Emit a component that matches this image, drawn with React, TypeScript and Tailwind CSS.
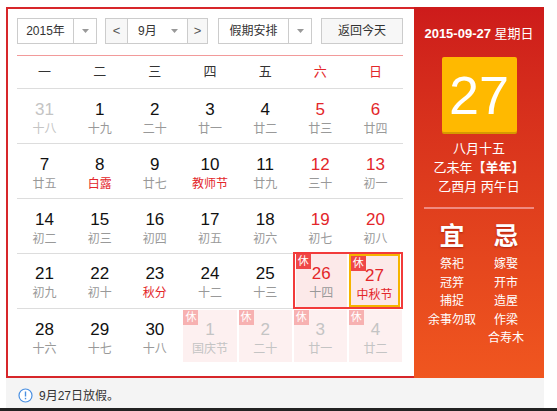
import React from "react";

type Day = {
  d: string;
  l: string;
  red?: boolean;
  fest?: boolean;
  other?: boolean;
  rest?: boolean;
  today?: boolean;
};

const weeks: Day[][] = [
  [
    { d: "31", l: "十八", other: true },
    { d: "1", l: "十九" },
    { d: "2", l: "二十" },
    { d: "3", l: "廿一" },
    { d: "4", l: "廿二" },
    { d: "5", l: "廿三", red: true },
    { d: "6", l: "廿四", red: true },
  ],
  [
    { d: "7", l: "廿五" },
    { d: "8", l: "白露", fest: true },
    { d: "9", l: "廿七" },
    { d: "10", l: "教师节", fest: true },
    { d: "11", l: "廿九" },
    { d: "12", l: "三十", red: true },
    { d: "13", l: "初一", red: true },
  ],
  [
    { d: "14", l: "初二" },
    { d: "15", l: "初三" },
    { d: "16", l: "初四" },
    { d: "17", l: "初五" },
    { d: "18", l: "初六" },
    { d: "19", l: "初七", red: true },
    { d: "20", l: "初八", red: true },
  ],
  [
    { d: "21", l: "初九" },
    { d: "22", l: "初十" },
    { d: "23", l: "秋分", fest: true },
    { d: "24", l: "十二" },
    { d: "25", l: "十三" },
    { d: "26", l: "十四", red: true, rest: true },
    { d: "27", l: "中秋节", red: true, fest: true, rest: true, today: true },
  ],
  [
    { d: "28", l: "十六" },
    { d: "29", l: "十七" },
    { d: "30", l: "十八" },
    { d: "1", l: "国庆节", other: true, rest: true },
    { d: "2", l: "二十", other: true, rest: true },
    { d: "3", l: "廿一", other: true, rest: true },
    { d: "4", l: "廿二", other: true, rest: true },
  ],
];

const font = "font-['Liberation_Sans','Noto_Sans_CJK_SC',sans-serif]";

function Caret() {
  return (
    <svg width="7" height="4" viewBox="0 0 7 4" className="block">
      <path d="M0 0h7L3.5 4z" fill="#999" />
    </svg>
  );
}

function Cell({ day }: { day: Day }) {
  const numColor = day.other
    ? "text-[#c4c4c4]"
    : day.red
      ? "text-[#e3262a]"
      : "text-[#111]";
  const lunarColor = day.other
    ? "text-[#c4c4c4]"
    : day.fest
      ? "text-[#e3262a]"
      : "text-[#999]";
  const bg = day.rest ? (day.other ? "bg-[#fdf0f0]" : "bg-[#fce9e9]") : "";
  const frame = day.today ? "border-2 border-[#f5b400]" : "";
  return (
    <div className={`relative mx-px h-full ${bg} ${frame} flex flex-col items-center pt-[9px]`}>
      {day.rest && (
        <span
          className={`absolute left-0 top-0 flex h-[15px] w-[15px] items-center justify-center text-[11px] leading-none text-white ${
            day.other ? "bg-[#f7b1b1]" : "bg-[#ef4747]"
          }`}
        >
          休
        </span>
      )}
      <span className={`text-[17px] leading-[22px] ${numColor}`}>{day.d}</span>
      <span className={`text-[12px] leading-[16px] ${lunarColor}`}>{day.l}</span>
    </div>
  );
}

export default function App() {
  const heads = ["一", "二", "三", "四", "五", "六", "日"];
  return (
    <div className={`relative h-[411px] w-[557px] overflow-hidden bg-white ${font}`}>
      <div className="ml-[6px] mt-[7px] flex w-[538px]">
        {/* left calendar */}
        <div className="h-[371px] w-[408px] border-y-2 border-l-2 border-[#d7262a] pl-[9px] pt-[9px]">
          <div className="flex h-[26px] w-[386px] items-stretch text-[12px] text-[#333]">
            <div className="flex w-[80px] border border-[#ccc] bg-white">
              <div className="flex flex-1 items-center justify-center">2015年</div>
              <div className="flex w-[23px] items-center justify-center border-l border-[#ccc]">
                <Caret />
              </div>
            </div>
            <div className="ml-[8px] flex w-[103px] border border-[#ccc] bg-white">
              <div className="flex w-[22px] items-center justify-center border-r border-[#ccc] bg-[#f7f7f7] text-[13px] text-[#555]">
                &lt;
              </div>
              <div className="flex flex-1 items-center justify-between pl-[10px] pr-[9px]">
                <span>9月</span>
                <Caret />
              </div>
              <div className="flex w-[20px] items-center justify-center border-l border-[#ccc] bg-[#f7f7f7] text-[13px] text-[#555]">
                &gt;
              </div>
            </div>
            <div className="ml-[10px] flex w-[94px] border border-[#ccc] bg-white">
              <div className="flex flex-1 items-center justify-center">假期安排</div>
              <div className="flex w-[23px] items-center justify-center border-l border-[#ccc]">
                <Caret />
              </div>
            </div>
            <div className="ml-[9px] flex flex-1 items-center justify-center border border-[#ccc] bg-[#f7f7f7]">
              返回今天
            </div>
          </div>
          <div className="mt-[11px] h-px w-[386px] bg-[#f29a9a]" />
          <div className="grid h-[33px] w-[386px] grid-cols-7 border-b border-[#ddd] text-[13px]">
            {heads.map((h, i) => (
              <div
                key={h}
                className={`flex items-center justify-center ${i > 4 ? "text-[#e3262a]" : "text-[#333]"}`}
              >
                {h}
              </div>
            ))}
          </div>
          {weeks.map((w, wi) => (
            <div
              key={wi}
              className={`grid w-[386px] grid-cols-7 ${wi < 4 ? "h-[55px] border-b border-[#ddd]" : "h-[54px]"}`}
            >
              {wi === 3 ? (
                <>
                  {w.slice(0, 5).map((d, i) => (
                    <Cell key={i} day={d} />
                  ))}
                  <div className="col-span-2 -mb-px -mt-[2px] grid grid-cols-2 border-2 border-[#f23b3b]">
                    {w.slice(5).map((d, i) => (
                      <div key={i} className="h-full">
                        <Cell day={d} />
                      </div>
                    ))}
                  </div>
                </>
              ) : (
                w.map((d, i) => (
                  <div key={i} className="h-full py-px">
                    <Cell day={d} />
                  </div>
                ))
              )}
            </div>
          ))}
        </div>

        {/* right panel */}
        <div className="flex h-[371px] w-[130px] flex-col items-center bg-gradient-to-b from-[#cd1b1b] to-[#f0561f] text-white">
          <div className="mt-[19px] text-[13px] font-bold leading-[16px]">
            2015-09-27 <span className="font-normal">星期日</span>
          </div>
          <div className="mt-[15px] flex h-[75px] w-[75px] items-center justify-center rounded-[2px] bg-[#ffb900] shadow-[0_2px_0_#d69a00]">
            <span className="text-[54px] leading-none text-white">27</span>
          </div>
          <div className="mt-[7px] flex flex-col items-center text-[13px] leading-[19px]">
            <span>八月十五</span>
            <span>
              乙未年<span className="font-bold">【羊年】</span>
            </span>
            <span>乙酉月 丙午日</span>
          </div>
          <div className="mt-[11px] h-[2px] w-[110px] bg-[#f08a80]" />
          <div className="mt-[12px] grid w-[108px] grid-cols-2">
            <div className="flex flex-col items-center">
              <span className="text-[25px] font-bold leading-[30px] [text-shadow:0_1px_2px_rgba(120,0,0,0.5)]">宜</span>
              <div className="mt-[4px] flex flex-col items-center text-[12px] leading-[18.5px]">
                <span>祭祀</span>
                <span>冠笄</span>
                <span>捕捉</span>
                <span className="whitespace-nowrap">余事勿取</span>
              </div>
            </div>
            <div className="flex flex-col items-center">
              <span className="text-[25px] font-bold leading-[30px] [text-shadow:0_1px_2px_rgba(120,0,0,0.5)]">忌</span>
              <div className="mt-[4px] flex flex-col items-center text-[12px] leading-[18.5px]">
                <span>嫁娶</span>
                <span>开市</span>
                <span>造屋</span>
                <span>作梁</span>
                <span>合寿木</span>
              </div>
            </div>
          </div>
        </div>
      </div>

      {/* info bar */}
      <div className="ml-[6px] flex h-[30px] w-[538px] items-center bg-[#f4f4f4] pl-[12px] pt-[5px] text-[12px] text-[#333]">
        <svg width="15" height="15" viewBox="0 0 15 15" className="mr-[6px]">
          <circle cx="7.5" cy="7.5" r="6.5" fill="#fff" stroke="#4a90e2" strokeWidth="1.2" />
          <rect x="6.8" y="3.5" width="1.4" height="5" fill="#4a90e2" />
          <rect x="6.8" y="9.8" width="1.4" height="1.5" fill="#4a90e2" />
        </svg>
        9月27日放假。
      </div>
      <div className="absolute bottom-0 left-0 h-[3px] w-full bg-[#222]" />
    </div>
  );
}
